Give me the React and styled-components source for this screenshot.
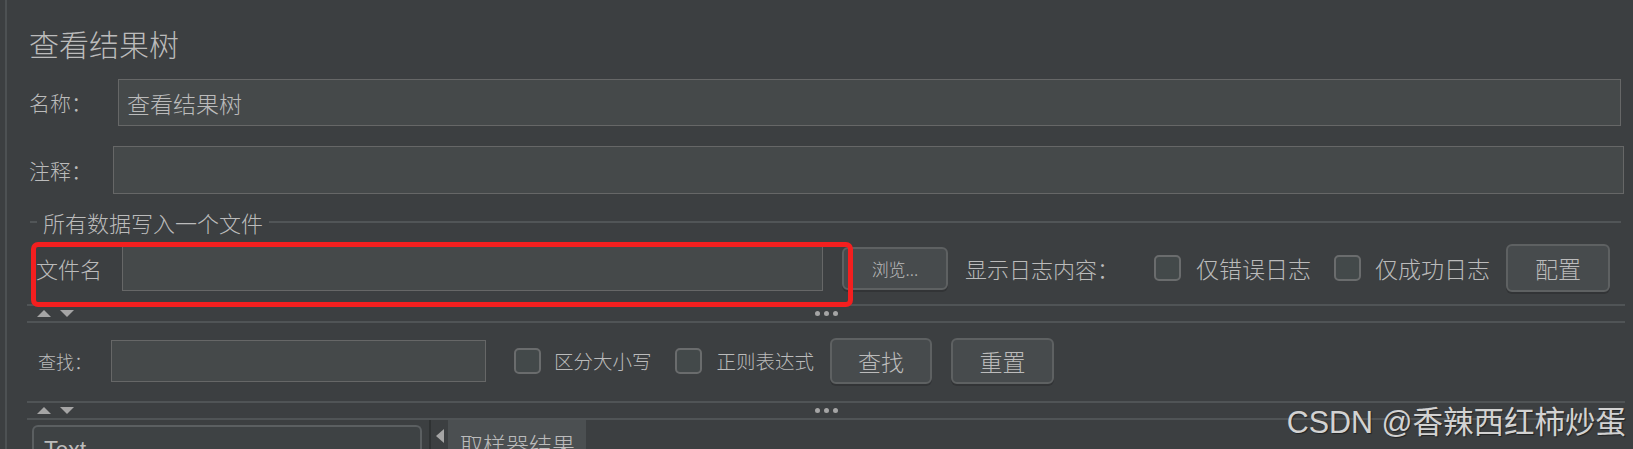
import React from 'react';
import styled, { createGlobalStyle } from 'styled-components';

const GlobalStyle = createGlobalStyle`
  html, body {
    margin: 0;
    padding: 0;
    background: #3c3f41;
  }
  body {
    font-family: "Noto Sans CJK SC", "Noto Sans", sans-serif;
    font-weight: 300;
    color: #bbbbbb;
    overflow: hidden;
  }
`;

const Page = styled.div`
  position: relative;
  display: flex;
  height: 449px;
  background: #3c3f41;
  overflow: hidden;
`;

const Rail = styled.div`
  flex: none;
  width: 5px;
  border-right: 2px solid #4d5153;
`;

const Main = styled.div`
  flex: 1;
  min-width: 0;
  display: flex;
  flex-direction: column;
  padding: 0 8px 0 20px;

  & > * {
    flex-shrink: 0;
  }
`;

const Title = styled.div`
  margin-top: 27px;
  padding-left: 2px;
  font-size: 30px;
  line-height: 32px;
  color: #bbbbbb;
`;

const FieldRow = styled.div`
  display: flex;
  align-items: center;
  margin-top: ${p => p.top}px;
`;

const Label = styled.div`
  flex: none;
  width: ${p => p.width}px;
  margin-left: ${p => p.indent || 2}px;
  font-size: ${p => p.size || 21}px;
  line-height: 1;
  color: #bbbbbb;
  white-space: nowrap;
`;

const Input = styled.div`
  box-sizing: border-box;
  flex: ${p => (p.width ? 'none' : '1')};
  width: ${p => (p.width ? `${p.width}px` : 'auto')};
  height: ${p => p.height}px;
  margin-right: ${p => p.right || 0}px;
  background: #45494a;
  border: 1.5px solid #666767;
  padding-left: 8px;
  display: flex;
  align-items: center;
  font-size: 23px;
  color: #bbbbbb;
`;

const Section = styled.div`
  display: flex;
  align-items: center;
  height: 24px;
  margin-top: 16px;
`;

const SectionLine = styled.div`
  height: 2px;
  background: #515557;
  flex: ${p => (p.grow ? '1' : 'none')};
  width: ${p => (p.grow ? 'auto' : '7px')};
  margin-left: ${p => (p.grow ? 0 : 3)}px;
  margin-right: 4px;
`;

const SectionText = styled.span`
  font-size: 22px;
  line-height: 1;
  padding: 0 6px 0 2px;
  color: #bbbbbb;
  white-space: nowrap;
`;

const Row = styled.div`
  display: flex;
  align-items: center;
  height: ${p => p.height}px;
  margin-top: ${p => p.top}px;
`;

const Button = styled.div`
  box-sizing: border-box;
  flex: none;
  width: ${p => p.width}px;
  height: ${p => p.height}px;
  margin-left: ${p => p.gap}px;
  border: 2px solid #5e6162;
  border-radius: 6px;
  background: #474b4d;
  box-shadow: 0 2px 0 #323436;
  display: flex;
  align-items: center;
  justify-content: center;
  font-size: ${p => p.size || 23}px;
  color: #bbbbbb;
`;

const Text = styled.span`
  flex: none;
  margin-left: ${p => p.gap}px;
  font-size: ${p => p.size || 23}px;
  line-height: 1;
  color: #bbbbbb;
  white-space: nowrap;
`;

const Check = styled.div`
  box-sizing: border-box;
  flex: none;
  width: 27px;
  height: 26px;
  margin-left: ${p => p.gap}px;
  border: 2px solid #6a6c6d;
  border-radius: 5px;
  background: #43494a;
`;

const Splitter = styled.div`
  box-sizing: border-box;
  display: grid;
  grid-template-columns: 1fr auto 1fr;
  align-items: center;
  height: 19px;
  margin-top: ${p => p.top}px;
  border-top: 2px solid #505456;
  border-bottom: 2px solid #505456;
`;

const Arrows = styled.div`
  display: flex;
  gap: 9px;
  padding-left: 10px;
`;

const ArrowUp = styled.span`
  width: 0;
  height: 0;
  border-left: 7px solid transparent;
  border-right: 7px solid transparent;
  border-bottom: 7px solid #a5a5a5;
`;

const ArrowDown = styled(ArrowUp)`
  border-bottom: none;
  border-top: 7px solid #a5a5a5;
`;

const Dots = styled.div`
  display: flex;
  gap: 4px;
`;

const Dot = styled.span`
  width: 5px;
  height: 5px;
  border-radius: 50%;
  background: #a5a5a5;
`;

const Bottom = styled.div`
  flex: 1 0 auto;
  display: flex;
  align-items: stretch;
`;

const Dropdown = styled.div`
  box-sizing: border-box;
  flex: none;
  width: 390px;
  margin: 5px 0 0 5px;
  border: 2px solid #5b5f61;
  border-bottom: none;
  border-radius: 6px 6px 0 0;
  background: #3e4244;
  display: flex;
  justify-content: space-between;
  padding: 10px 16px 0 10px;
  font-family: "Liberation Sans", "Noto Sans", sans-serif;
  font-weight: 400;
  font-size: 23px;
  color: #bbbbbb;
`;

const DropArrow = styled.span`
  margin-top: 14px;
  width: 0;
  height: 0;
  border-left: 8px solid transparent;
  border-right: 8px solid transparent;
  border-top: 8px solid #a5a5a5;
`;

const Collapse = styled.div`
  flex: none;
  width: 17px;
  margin-left: 7px;
  border-left: 2px solid #2f3233;
  display: flex;
  justify-content: center;
  padding-top: 9px;
`;

const ArrowLeft = styled.span`
  width: 0;
  height: 0;
  border-top: 7px solid transparent;
  border-bottom: 7px solid transparent;
  border-right: 8px solid #a5a5a5;
`;

const Tab = styled.div`
  flex: none;
  width: 138px;
  background: #4b4f51;
  padding: 13px 0 0 12px;
  box-sizing: border-box;
  font-size: 23px;
  line-height: 1;
  color: #bbbbbb;
  white-space: nowrap;
`;

const Highlight = styled.div`
  position: absolute;
  left: 31px;
  top: 242px;
  width: 822px;
  height: 65px;
  box-sizing: border-box;
  border: 5px solid #f41f1f;
  border-radius: 7px;
  pointer-events: none;
`;

const Watermark = styled.div`
  position: absolute;
  right: 7px;
  top: 402px;
  font-size: 30.5px;
  font-weight: 400;
  line-height: 36px;
  color: #d2d2d2;
  text-shadow: 1px 1px 1px rgba(0, 0, 0, 0.45);
  white-space: nowrap;
`;

const Latin = styled.span`
  font-family: "Liberation Sans", sans-serif;
`;

function SplitBar({ top }) {
  return (
    <Splitter top={top}>
      <Arrows>
        <ArrowUp />
        <ArrowDown />
      </Arrows>
      <Dots>
        <Dot />
        <Dot />
        <Dot />
      </Dots>
      <div />
    </Splitter>
  );
}

export default function App() {
  return (
    <Page>
      <GlobalStyle />
      <Rail />
      <Main>
        <Title>查看结果树</Title>
        <FieldRow top={20}>
          <Label width={89}>名称：</Label>
          <Input height={47} right={4}>查看结果树</Input>
        </FieldRow>
        <FieldRow top={20}>
          <Label width={84}>注释：</Label>
          <Input height={48} right={1} />
        </FieldRow>
        <Section>
          <SectionLine />
          <SectionText>所有数据写入一个文件</SectionText>
          <SectionLine grow />
        </Section>
        <Row height={48} top={10}>
          <Label width={86} indent={9} size={22}>文件名</Label>
          <Input width={701} height={45} />
          <Button width={106} height={43} gap={19} size={17}>浏览...</Button>
          <Text gap={17} size={22}>显示日志内容：</Text>
          <Check gap={35} />
          <Text gap={15}>仅错误日志</Text>
          <Check gap={23} />
          <Text gap={14}>仅成功日志</Text>
          <Button width={104} height={48} gap={16}>配置</Button>
        </Row>
        <SplitBar top={12} />
        <Row height={46} top={15}>
          <Label width={73} indent={11} size={18}>查找：</Label>
          <Input width={375} height={42} />
          <Check gap={28} />
          <Text gap={13} size={19.5}>区分大小写</Text>
          <Check gap={23} />
          <Text gap={15} size={19.5}>正则表达式</Text>
          <Button width={102} height={46} gap={16}>查找</Button>
          <Button width={103} height={46} gap={19}>重置</Button>
        </Row>
        <SplitBar top={17} />
        <Bottom>
          <Dropdown>
            <span>Text</span>
            <DropArrow />
          </Dropdown>
          <Collapse>
            <ArrowLeft />
          </Collapse>
          <Tab>取样器结果</Tab>
        </Bottom>
      </Main>
      <Highlight />
      <Watermark>
        <Latin>CSDN @</Latin>香辣西红柿炒蛋
      </Watermark>
    </Page>
  );
}
